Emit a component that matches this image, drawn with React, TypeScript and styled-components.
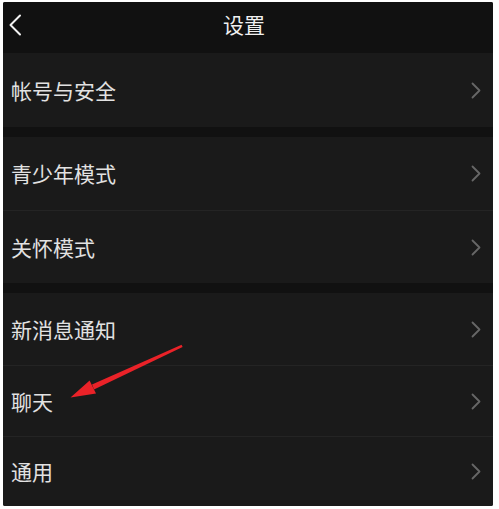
import React from "react";
import styled, { createGlobalStyle } from "styled-components";

const GlobalStyle = createGlobalStyle`
  html, body {
    margin: 0;
    padding: 0;
    background: #ffffff;
  }
  body {
    font-family: "Noto Sans CJK SC", "Noto Sans", sans-serif;
  }
`;

const groups: { label: string; height: number }[][] = [
  [{ label: "帐号与安全", height: 74 }],
  [
    { label: "青少年模式", height: 73 },
    { label: "关怀模式", height: 73 },
  ],
  [
    { label: "新消息通知", height: 72 },
    { label: "聊天", height: 71 },
    { label: "通用", height: 70 },
  ],
];

const BackIcon = () => (
  <svg width="14" height="22" viewBox="0 0 14 22">
    <path d="M12 1.5 L2.5 11 L12 20.5" fill="none" stroke="#f2f2f2" strokeWidth="2" strokeLinecap="round" strokeLinejoin="round" />
  </svg>
);

const ChevronIcon = () => (
  <svg width="10" height="17" viewBox="0 0 10 17">
    <path d="M1.5 1.5 L8.5 8.5 L1.5 15.5" fill="none" stroke="#676767" strokeWidth="1.8" strokeLinecap="round" strokeLinejoin="round" />
  </svg>
);

const App = () => {
  return (
    <>
      <GlobalStyle />
      <Page>
        <Panel>
          <Header>
            <BackButton>
              <BackIcon />
            </BackButton>
            <Title>设置</Title>
            <span />
          </Header>
          {groups.map((group, gi) => (
            <Group key={gi}>
              {group.map((item, ii) => (
                <Row key={item.label} $height={item.height} $divider={ii > 0}>
                  <Label>{item.label}</Label>
                  <ChevronIcon />
                </Row>
              ))}
            </Group>
          ))}
          {/* red annotation arrow pointing at 聊天 */}
          <Arrow width="124" height="60" viewBox="0 0 124 60">
            <path d="M117.6 4 L116.6 1.8 L27 41.6 L29 46.4 Z" fill="#ea2228" />
            <path d="M5.5 54.5 L24.6 37.6 L31 50.4 Z" fill="#ea2228" />
          </Arrow>
        </Panel>
      </Page>
    </>
  );
};

const Page = styled.div`
  padding: 2px 6px 3px 3px;
  background: #ffffff;
`;

const Panel = styled.div`
  position: relative;
  background: #111111;
  height: 504px;
  border-radius: 2px;
  overflow: hidden;
  display: flex;
  flex-direction: column;
  gap: 10px;
`;

const Header = styled.div`
  height: 51px;
  box-sizing: border-box;
  margin-bottom: -10px;
  display: grid;
  grid-template-columns: 40px 1fr 40px;
  align-items: center;
  background: #111111;
  padding: 0 8px 6px 0;
`;

const BackButton = styled.div`
  display: flex;
  align-items: center;
  padding-left: 5px;
`;

const Title = styled.div`
  text-align: center;
  color: #f0f0f0;
  font-size: 21px;
  line-height: 1;
`;

const Group = styled.div`
  display: flex;
  flex-direction: column;
  background: #1a1a1a;
`;

const Row = styled.div<{ $height: number; $divider: boolean }>`
  height: ${(p) => p.$height}px;
  display: flex;
  align-items: center;
  justify-content: space-between;
  padding: 0 12px 0 8px;
  box-sizing: border-box;
  border-top: ${(p) => (p.$divider ? "1px solid #242424" : "none")};
`;

const Label = styled.span`
  color: #e2e2e2;
  font-size: 21px;
  line-height: 1;
`;

const Arrow = styled.svg`
  position: absolute;
  left: 62px;
  top: 341px;
  pointer-events: none;
`;

export default App;
